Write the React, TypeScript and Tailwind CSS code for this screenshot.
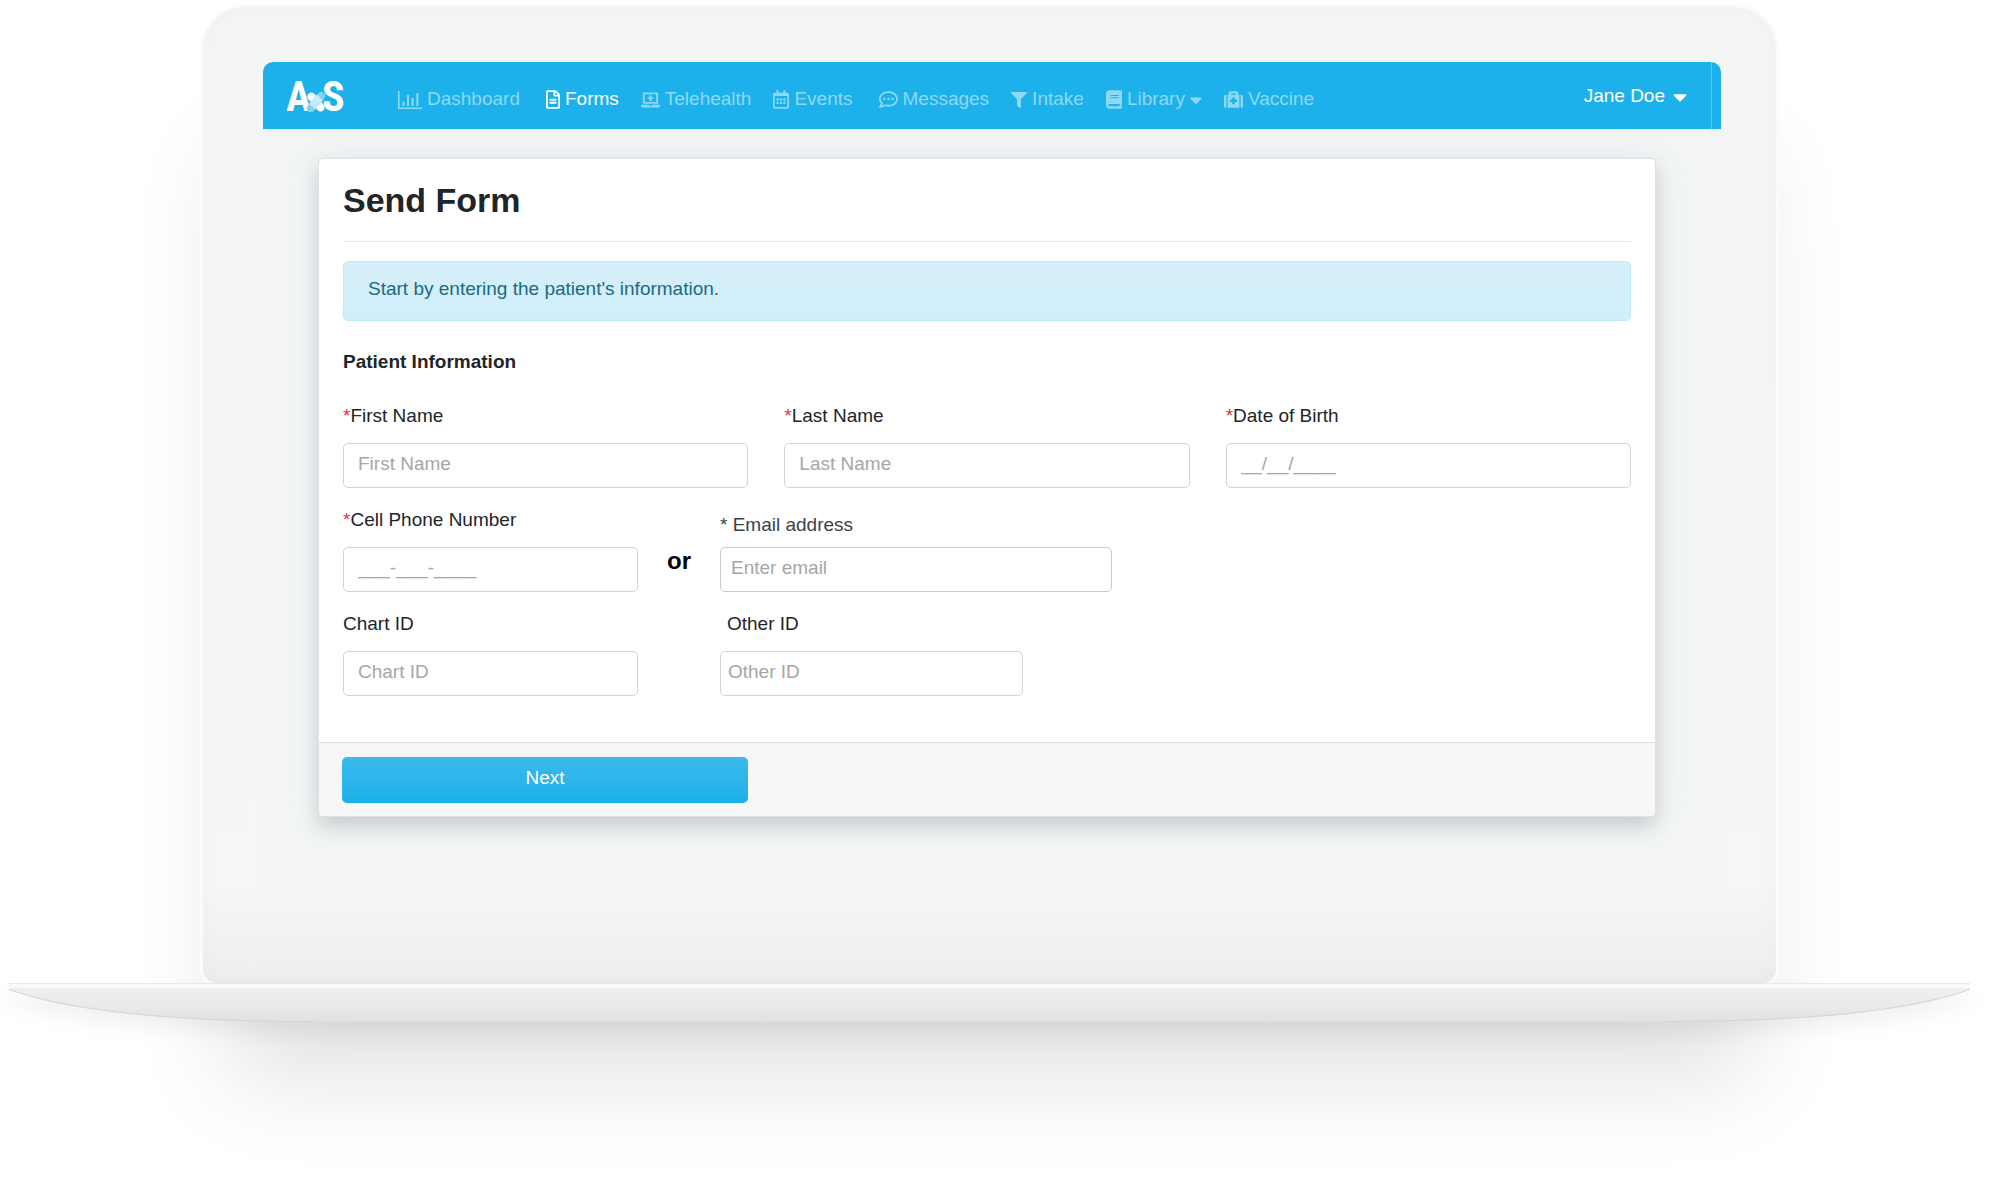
import type { ReactNode } from "react";
import {
  FaBook,
  FaCaretDown,
  FaFilter,
  FaLaptopMedical,
  FaMedkit,
  FaRegCalendarAlt,
  FaRegCommentDots,
  FaRegFileAlt,
} from "react-icons/fa";

function ChartIcon() {
  return (
    <svg viewBox="0 0 24 20" className="h-5 w-6" fill="currentColor" aria-hidden="true">
      <path d="M0 1h1.6v16.4H24V19H0z" />
      <path d="M4.6 11.5h2V16h-2zM9 5h2v11H9zM13.6 8h2v8h-2zM18.4 3h2v13h-2z" />
    </svg>
  );
}

function Logo() {
  return (
    <a href="#home" aria-label="AxS" className="flex items-center">
      <svg viewBox="0 0 60 56" className="h-14 w-[60px]" aria-hidden="true">
        <g
          fill="#fff"
          fontFamily="'Liberation Sans Narrow','Roboto Condensed','Open Sans Condensed','Liberation Sans',sans-serif"
          fontWeight="700"
          fontSize="42"
        >
          <text x="-1" y="43">A</text>
          <text x="35" y="43">S</text>
        </g>
        <g transform="translate(29 34)">
          <rect x="-11" y="-4" width="22" height="8" rx="4" fill="#fff" transform="rotate(50)" />
          <rect x="-12" y="-4" width="24" height="8" rx="4" fill="#7fd2f4" transform="rotate(-50)" />
          <rect x="-6" y="-4" width="12" height="8" fill="#c3ebfb" transform="rotate(-50)" />
        </g>
      </svg>
    </a>
  );
}

type NavItem = { label: string; icon: ReactNode; active?: boolean; wide?: boolean; menu?: boolean };

const navItems: NavItem[] = [
  { label: "Dashboard", icon: <ChartIcon />, wide: true },
  { label: "Forms", icon: <FaRegFileAlt className="h-[19px] w-[14px]" />, active: true },
  { label: "Telehealth", icon: <FaLaptopMedical className="h-4 w-[19px]" /> },
  { label: "Events", icon: <FaRegCalendarAlt className="h-[19px] w-4" />, wide: true },
  { label: "Messages", icon: <FaRegCommentDots className="h-[19px] w-[19px]" /> },
  { label: "Intake", icon: <FaFilter className="h-4 w-4" /> },
  { label: "Library", icon: <FaBook className="h-[19px] w-4" />, menu: true },
  { label: "Vaccine", icon: <FaMedkit className="h-[19px] w-[19px]" /> },
];

function Field({
  id,
  label,
  placeholder,
  required,
  labelClass = "",
  inputClass = "px-[14px]",
}: {
  id: string;
  label: string;
  placeholder: string;
  required?: boolean;
  labelClass?: string;
  inputClass?: string;
}) {
  return (
    <div className="flex flex-col">
      <label htmlFor={id} className={"mb-[13px] leading-7 " + labelClass}>
        {required && <span className="text-[#dc3545]">*</span>}
        {label}
      </label>
      <input
        id={id}
        type="text"
        placeholder={placeholder}
        className={
          "h-[45px] w-full rounded-[5px] border border-[#ced4da] bg-white pb-1 placeholder:text-[#a6a6a6] " +
          inputClass
        }
      />
    </div>
  );
}

function Header() {
  return (
    <header className="flex rounded-t-[10px] bg-[#1cb1ea] pr-[9px]">
      <div className="flex min-h-[67px] flex-1 items-center border-r border-white/30 pr-6 pl-6">
        <Logo />
        <nav className="ml-[51px] flex flex-1 items-center gap-[22px] pt-2">
          {navItems.map((item) => (
            <a
              key={item.label}
              href={"#" + item.label.toLowerCase()}
              className={
                "flex items-center gap-[5px] whitespace-nowrap " +
                (item.active ? "text-white " : "text-[#8dd8f5] ") +
                (item.wide ? "mr-1" : "")
              }
            >
              {item.icon}
              {item.label}
              {item.menu && <FaCaretDown className="h-5 w-3" />}
            </a>
          ))}
        </nav>
        <button type="button" className="flex items-center gap-2 pt-0.5 whitespace-nowrap text-white">
          Jane Doe
          <FaCaretDown className="h-[22px] w-[14px]" />
        </button>
      </div>
    </header>
  );
}

function SendForm() {
  return (
    <form className="overflow-hidden rounded-[5px] border border-[#dfe1e2] bg-white shadow-[0_10px_20px_rgba(0,0,0,0.15),0_0_36px_rgba(150,180,210,0.12)]">
      <div className="px-[24px] pt-[21px] pb-[46px]">
        <h1 className="text-[34px] leading-10 font-bold">Send Form</h1>
        <hr className="mt-[21px] border-[#e6e7e8]" />
        <div
          role="status"
          className="mt-[19px] rounded-[5px] border border-[#bfeaf9] bg-linear-to-b from-[#d6f0fb] to-[#d0eefa] px-6 pt-[13px] pb-[17px] leading-7 text-[#1a6a86]"
        >
          Start by entering the patient's information.
        </div>
        <h2 className="mt-[27px] leading-7 font-bold">Patient Information</h2>

        <div className="mt-[26px] grid grid-cols-3 gap-9">
          <Field id="first-name" label="First Name" placeholder="First Name" required />
          <Field id="last-name" label="Last Name" placeholder="Last Name" required />
          <Field id="birth-date" label="Date of Birth" placeholder="__/__/____" required />
        </div>

        <div className="mt-[18px] flex items-end">
          <div className="w-[295px]">
            <Field id="cell-phone" label="Cell Phone Number" placeholder="___-___-____" required />
          </div>
          <div className="h-[45px] w-[82px] text-center text-2xl leading-7 font-bold text-black">or</div>
          <div className="flex w-[392px] flex-col">
            <label htmlFor="email" className="mb-2 leading-7 text-[#3d4247]">
              * Email address
            </label>
            <input
              id="email"
              type="email"
              placeholder="Enter email"
              className="h-[45px] w-full rounded-[5px] border border-[#cccccc] bg-white px-[10px] pb-1 placeholder:text-[#a6a6a6]"
            />
          </div>
        </div>

        <div className="mt-[18px] flex gap-[82px]">
          <div className="w-[295px]">
            <Field id="chart-id" label="Chart ID" placeholder="Chart ID" />
          </div>
          <div className="w-[303px]">
            <Field id="other-id" label="Other ID" placeholder="Other ID" labelClass="px-[7px]" inputClass="px-[7px]" />
          </div>
        </div>
      </div>

      <div className="grid grid-cols-3 gap-9 border-t border-[#dfdfdf] bg-[#f7f7f7] px-[23px] pt-[14px] pb-[13px]">
        <button
          type="submit"
          className="h-[46px] rounded-[5px] bg-linear-to-b from-[#3bbaeb] to-[#1bb0ea] pb-1 text-white"
        >
          Next
        </button>
      </div>
    </form>
  );
}

function LaptopBase() {
  return (
    <svg
      viewBox="0 0 1961 40"
      preserveAspectRatio="none"
      className="relative block h-10 w-full drop-shadow-[0_10px_10px_rgba(0,0,0,0.06)]"
      aria-hidden="true"
    >
      <defs>
        <linearGradient id="base-fill" x1="0" y1="0" x2="0" y2="1">
          <stop offset="0" stopColor="#f0f1f1" />
          <stop offset="0.6" stopColor="#e9eaea" />
          <stop offset="0.94" stopColor="#e0e2e2" />
          <stop offset="1" stopColor="#cfd0d0" />
        </linearGradient>
        <clipPath id="base-shape">
          <path d="M0 0H1961V7C1901 28 1801 39 1658 39H303C160 39 60 28 0 7Z" />
        </clipPath>
      </defs>
      <g clipPath="url(#base-shape)">
        <rect width="1961" height="40" fill="url(#base-fill)" />
        <rect y="0" width="1961" height="5" fill="#f9f9f9" />
        <rect y="0" width="1961" height="1" fill="#e9e9e9" />
        <path
          d="M0 7C60 28 160 39 303 39M1658 39C1801 39 1901 28 1961 7"
          fill="none"
          stroke="#d4d5d5"
          strokeWidth="2"
        />
      </g>
    </svg>
  );
}

export default function App() {
  return (
    <div className="min-h-screen overflow-hidden bg-white pt-[7px] pr-[38px] pl-[9px] font-['Liberation_Sans',Arial,sans-serif] text-[19px] text-[#212529]">
      <div className="mx-[194px] rounded-t-[42px] rounded-b-[14px] bg-[#f5f5f5] bg-linear-to-b from-[#f4f5f5] via-[#f6f6f6] via-90% to-[#eeeeee] pt-[55px] pr-[55px] pb-[88px] pl-[60px] shadow-[inset_0_0_24px_rgba(0,0,0,0.025),0_0_0_3px_#fbfbfb,0_120px_100px_-26px_rgba(0,0,0,0.12)]">
        <div className="rounded-t-[10px] bg-[#f3f5f5]">
          <Header />
          <main className="pt-[29px] pr-[65px] pb-[78px] pl-[55px]">
            <SendForm />
          </main>
        </div>
      </div>
      <LaptopBase />
    </div>
  );
}
